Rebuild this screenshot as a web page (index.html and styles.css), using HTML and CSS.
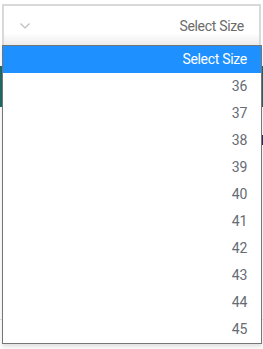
FILE: index.html
```html
<!DOCTYPE html>
<html lang="en">
<head>
  <meta charset="UTF-8">
  <meta name="viewport" content="width=device-width, initial-scale=1.0">
  <title>Select Size</title>
  <link rel="stylesheet" href="styles.css">
</head>
<body>

  <div class="size-picker">
    <div class="size-select">
      <svg class="chevron" width="10" height="6" viewBox="0 0 10 6">
        <path d="M0.5 0.5 L5 5 L9.5 0.5" fill="none" stroke="#bdbdbd" stroke-width="1.2"/>
      </svg>
      <span class="size-label">Select Size</span>
    </div>

    <div class="page-under">
      <div class="teal-card"></div>
      <div class="navy-tag"></div>
      <div class="thin-rule"></div>
    </div>

    <ul class="size-list">
      <li class="selected">Select Size</li>
      <li>36</li>
      <li>37</li>
      <li>38</li>
      <li>39</li>
      <li>40</li>
      <li>41</li>
      <li>42</li>
      <li>43</li>
      <li>44</li>
      <li>45</li>
    </ul>
  </div>

</body>
</html>
```
FILE: styles.css
```css
body {
  margin: 0;
  background: #fff;
  font-family: Roboto, "Liberation Sans", sans-serif;
}

.size-picker {
  position: relative;
  width: 263px;
  height: 349px;
  padding-top: 4px;
  box-sizing: border-box;
}

.size-select {
  display: flex;
  align-items: center;
  justify-content: space-between;
  margin: 0 2px;
  height: 41px;
  box-sizing: border-box;
  border: 2px solid #d9d9d9;
  border-bottom: none;
  background: linear-gradient(#fff 0%, #fff 70%, #ececec 100%);
  padding: 0 15px 0 16px;
}

.chevron {
  display: block;
  margin-top: 1px;
}

.size-label {
  font-size: 14px;
  color: #6b6b6b;
  letter-spacing: -0.3px;
}

.page-under {
  position: relative;
  height: 300px;
}

.teal-card {
  margin-top: 21px;
  height: 41px;
  background: #1f6b6b;
}

.navy-tag {
  margin: 28px 0 0 auto;
  width: 4px;
  height: 10px;
  background: #2e2a6e;
}

.thin-rule {
  margin-top: 174px;
  height: 1px;
  background: #e3e3e3;
}

.size-list {
  position: absolute;
  top: 45px;
  left: 2px;
  width: 260px;
  margin: 0;
  padding: 0;
  list-style: none;
  box-sizing: border-box;
  border: 1px solid #767676;
  background: #fff;
  box-shadow: 0 3px 4px rgba(0, 0, 0, 0.12);
}

.size-list li {
  height: 27px;
  line-height: 27px;
  padding-right: 14px;
  text-align: right;
  font-size: 14px;
  color: #666b74;
  letter-spacing: -0.3px;
}

.size-list li.selected {
  background: #1e90ff;
  color: #fff;
}
```
